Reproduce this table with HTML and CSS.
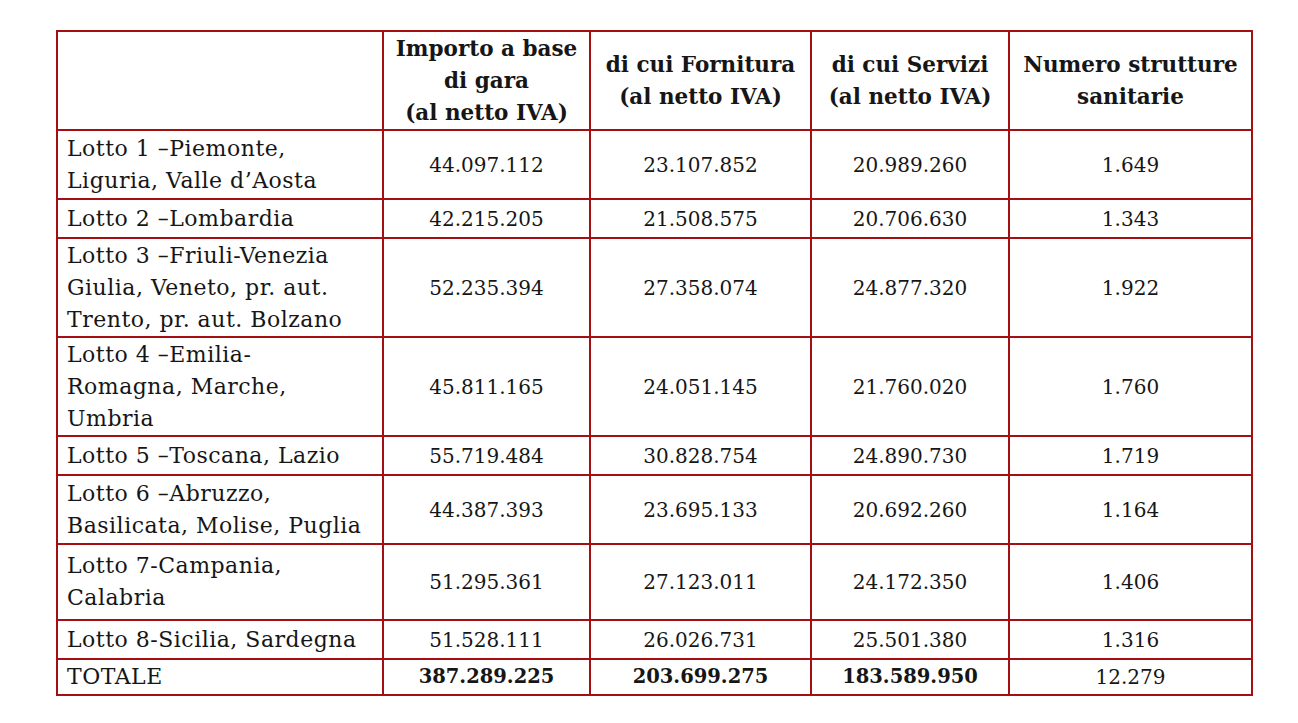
FILE: index.html
```html
<!DOCTYPE html>
<html lang="it">
<head>
<meta charset="utf-8">
<link rel="stylesheet" href="styles.css">
</head>
<body>
<table class="lotti">
  <colgroup>
    <col class="c1"><col class="c2"><col class="c3"><col class="c4"><col class="c5">
  </colgroup>
  <thead>
    <tr class="head">
      <th></th>
      <th>Importo a base<br>di gara<br>(al netto IVA)</th>
      <th>di cui Fornitura<br>(al netto IVA)</th>
      <th>di cui Servizi<br>(al netto IVA)</th>
      <th>Numero strutture<br>sanitarie</th>
    </tr>
  </thead>
  <tbody>
    <tr class="r2"><td>Lotto 1 –Piemonte,<br>Liguria, Valle d’Aosta</td><td>44.097.112</td><td>23.107.852</td><td>20.989.260</td><td>1.649</td></tr>
    <tr class="r1"><td>Lotto 2 –Lombardia</td><td>42.215.205</td><td>21.508.575</td><td>20.706.630</td><td>1.343</td></tr>
    <tr class="r3"><td>Lotto 3 –Friuli-Venezia<br>Giulia, Veneto, pr. aut.<br>Trento, pr. aut. Bolzano</td><td>52.235.394</td><td>27.358.074</td><td>24.877.320</td><td>1.922</td></tr>
    <tr class="r3"><td>Lotto 4 –Emilia-<br>Romagna, Marche,<br>Umbria</td><td>45.811.165</td><td>24.051.145</td><td>21.760.020</td><td>1.760</td></tr>
    <tr class="r1"><td>Lotto 5 –Toscana, Lazio</td><td>55.719.484</td><td>30.828.754</td><td>24.890.730</td><td>1.719</td></tr>
    <tr class="r2"><td>Lotto 6 –Abruzzo,<br>Basilicata, Molise, Puglia</td><td>44.387.393</td><td>23.695.133</td><td>20.692.260</td><td>1.164</td></tr>
    <tr class="r2b"><td>Lotto 7-Campania,<br>Calabria</td><td>51.295.361</td><td>27.123.011</td><td>24.172.350</td><td>1.406</td></tr>
    <tr class="r1"><td>Lotto 8-Sicilia, Sardegna</td><td>51.528.111</td><td>26.026.731</td><td>25.501.380</td><td>1.316</td></tr>
    <tr class="tot"><td>TOTALE</td><td class="b">387.289.225</td><td class="b">203.699.275</td><td class="b">183.589.950</td><td>12.279</td></tr>
  </tbody>
</table>
</body>
</html>
```
FILE: styles.css
```css
html, body {
  margin: 0;
  padding: 0;
  background: #ffffff;
}
body {
  padding: 30px 0 0 56px;
  font-family: "DejaVu Serif", "Liberation Serif", serif;
  color: #161616;
}
.lotti {
  border-collapse: collapse;
  table-layout: fixed;
  width: 1195px;
  font-size: 20px;
  line-height: 32px;
}
.c1 { width: 326px; }
.c2 { width: 207px; }
.c3 { width: 221px; }
.c4 { width: 198px; }
.c5 { width: 243px; }
.lotti th,
.lotti td {
  border: 2px solid #a30f12;
  padding: 0 6px;
  text-align: center;
  vertical-align: middle;
  font-weight: normal;
  white-space: nowrap;
}
.lotti th {
  font-weight: bold;
  font-size: 21.5px;
  height: 97px;
}
.lotti td:first-child {
  text-align: left;
  font-size: 22px;
  letter-spacing: 0.5px;
  padding-left: 9px;
}
.r1 td { height: 37px; }
.r2 td { height: 67px; }
.r2b td { height: 74px; }
.r3 td { height: 97px; }
.tot td { height: 34px; }
.lotti td.b {
  font-weight: bold;
  font-size: 19.5px;
}
```
